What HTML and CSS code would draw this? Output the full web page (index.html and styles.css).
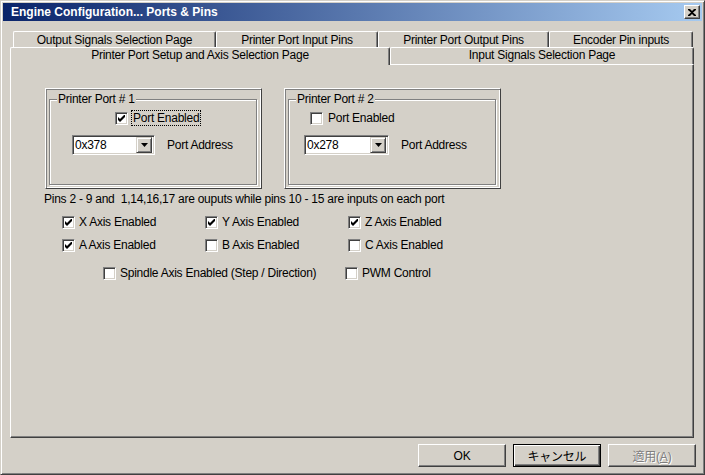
FILE: index.html
```html
<!DOCTYPE html>
<html lang="en">
<head>
    <meta charset="UTF-8">
    <title>Engine Configuration... Ports &amp; Pins</title>
    <link rel="stylesheet" href="styles.css">
</head>
<body>
<div class="window">
    <div class="titlebar">
        <span class="title">Engine Configuration... Ports &amp; Pins</span>
        <span class="close-btn">
            <svg width="8" height="7" viewBox="0 0 8 7"><path d="M0 0h2l2 2 2-2h2v1L5 3.5 8 6v1H6L4 5 2 7H0V6l3-2.5L0 1z" fill="#000"/></svg>
        </span>
    </div>

    <div class="client">
        <div class="tab-row back">
            <div class="tab t1">Output Signals Selection Page</div>
            <div class="tab t2">Printer Port Input Pins</div>
            <div class="tab t3">Printer Port Output Pins</div>
            <div class="tab t4">Encoder Pin inputs</div>
        </div>
        <div class="tab-row front">
            <div class="tab active t5">Printer Port Setup and Axis Selection Page</div>
            <div class="tab t6">Input Signals Selection Page</div>
        </div>

        <div class="panel">
            <div class="ports">
                <div class="port-frame">
                    <fieldset class="group">
                        <legend>Printer Port # 1</legend>
                        <div class="port-check p1">
                            <span class="check"><svg width="7" height="7" viewBox="0 0 7 7"><path d="M0 2L2 4L6 0H7V2L2 7L0 5Z" fill="#000"/></svg></span>
                            <span class="focus">Port Enabled</span>
                        </div>
                        <div class="address-row p1">
                            <div class="combo">
                                <span class="combo-value">0x378</span>
                                <span class="combo-btn"><svg width="7" height="4" viewBox="0 0 7 4"><path d="M0 0h7L3.5 4z" fill="#000"/></svg></span>
                            </div>
                            <span>Port Address</span>
                        </div>
                    </fieldset>
                </div>
                <div class="port-frame">
                    <fieldset class="group">
                        <legend>Printer Port # 2</legend>
                        <div class="port-check p2">
                            <span class="check"></span>
                            <span class="plain">Port Enabled</span>
                        </div>
                        <div class="address-row p2">
                            <div class="combo wide">
                                <span class="combo-value">0x278</span>
                                <span class="combo-btn"><svg width="7" height="4" viewBox="0 0 7 4"><path d="M0 0h7L3.5 4z" fill="#000"/></svg></span>
                            </div>
                            <span>Port Address</span>
                        </div>
                    </fieldset>
                </div>
            </div>

            <p class="pins-note">Pins 2 - 9 and&nbsp; 1,14,16,17 are ouputs while pins 10 - 15 are inputs on each port</p>

            <div class="axis-grid">
                <label class="option"><span class="check"><svg width="7" height="7" viewBox="0 0 7 7"><path d="M0 2L2 4L6 0H7V2L2 7L0 5Z" fill="#000"/></svg></span>X Axis Enabled</label>
                <label class="option"><span class="check"><svg width="7" height="7" viewBox="0 0 7 7"><path d="M0 2L2 4L6 0H7V2L2 7L0 5Z" fill="#000"/></svg></span>Y Axis Enabled</label>
                <label class="option"><span class="check"><svg width="7" height="7" viewBox="0 0 7 7"><path d="M0 2L2 4L6 0H7V2L2 7L0 5Z" fill="#000"/></svg></span>Z Axis Enabled</label>
                <label class="option"><span class="check"><svg width="7" height="7" viewBox="0 0 7 7"><path d="M0 2L2 4L6 0H7V2L2 7L0 5Z" fill="#000"/></svg></span>A Axis Enabled</label>
                <label class="option"><span class="check"></span>B Axis Enabled</label>
                <label class="option"><span class="check"></span>C Axis Enabled</label>
            </div>

            <div class="extra-row">
                <label class="option spindle"><span class="check"></span>Spindle Axis Enabled (Step / Direction)</label>
                <label class="option"><span class="check"></span>PWM Control</label>
            </div>
        </div>

        <div class="buttons">
            <button class="btn">OK</button>
            <button class="btn default">キャンセル</button>
            <button class="btn disabled">適用(<u>A</u>)</button>
        </div>
    </div>
</div>
</body>
</html>
```

FILE: styles.css
```css
body {
    margin: 0;
    font-family: "Liberation Sans", "Noto Sans CJK JP", sans-serif;
    font-size: 12px;
    letter-spacing: -0.25px;
    color: #000;
}

.window {
    width: 705px;
    height: 475px;
    box-sizing: border-box;
    background-color: #d4d0c8;
    border: 1px solid;
    border-color: #d4d0c8 #404040 #404040 #d4d0c8;
    box-shadow: inset 1px 1px #fff, inset -1px -1px #808080;
    padding: 2px;
}

.titlebar {
    height: 18px;
    display: flex;
    align-items: center;
    justify-content: space-between;
    padding: 0 2px 0 8px;
    background: linear-gradient(to right, #0a246a, #a6caf0);
}

.title {
    color: #fff;
    font-weight: bold;
    letter-spacing: 0;
}

.close-btn {
    width: 16px;
    height: 14px;
    box-sizing: border-box;
    display: flex;
    align-items: center;
    justify-content: center;
    background-color: #d4d0c8;
    border: 1px solid;
    border-color: #fff #404040 #404040 #fff;
    box-shadow: inset -1px -1px #808080;
}

.client {
    padding: 10px 0 0 7px;
}

/* tabs */
.tab-row {
    display: flex;
}

.tab-row.back {
    height: 16px;
    margin-left: 3px;
}

.tab-row.front {
    height: 17px;
}

.tab {
    box-sizing: border-box;
    text-align: center;
    line-height: 14px;
    border-top: 1px solid #fff;
    border-left: 1px solid #fff;
    border-right: 1px solid #404040;
    box-shadow: inset -1px 0 #808080;
    border-radius: 2px 2px 0 0;
}

.back .tab {
    padding-top: 1px;
}

.t1 { width: 203px; }
.t2 { width: 162px; }
.t3 { width: 171px; }
.t4 { width: 144px; }
.t5 { width: 380px; }
.t6 { width: 304px; }

.tab.active {
    position: relative;
    z-index: 1;
    height: 18px;
    background-color: #d4d0c8;
}

/* page */
.panel {
    width: 684px;
    height: 374px;
    box-sizing: border-box;
    border: 1px solid;
    border-color: #fff #404040 #404040 #fff;
    box-shadow: inset -1px -1px #808080;
    padding: 23px 0 0 33px;
}

.ports {
    display: flex;
    gap: 22px;
    margin-left: 1px;
}

.port-frame {
    width: 217px;
    height: 101px;
    box-sizing: border-box;
    border: 1px solid;
    border-color: #fff #404040 #404040 #fff;
    box-shadow: inset 1px 1px #808080, inset -1px -1px #fff;
    padding: 3px 4px 4px 3px;
}

.group {
    margin: 0;
    padding: 0;
    height: 93px;
    box-sizing: border-box;
    border: 1px solid #808080;
    box-shadow: 1px 1px #fff, inset 1px 1px #fff;
    min-width: 0;
}

.group legend {
    margin-left: 7px;
    padding: 0 1px;
    line-height: 14px;
    background-color: #d4d0c8;
}

.port-check {
    display: flex;
    align-items: center;
    height: 14px;
    margin-top: 5px;
}

.port-check.p1 { margin-left: 65px; }
.port-check.p2 { margin-left: 21px; }

.port-check .check {
    margin-right: 4px;
}

.focus {
    outline: 1px dotted #000;
    padding: 0 1px;
}

.plain {
    padding: 0 1px;
}

.address-row {
    display: flex;
    align-items: center;
    gap: 12px;
    margin-top: 10px;
}

.address-row.p1 { margin-left: 22px; }
.address-row.p2 { margin-left: 15px; }

.combo {
    width: 83px;
    height: 20px;
    box-sizing: border-box;
    display: flex;
    align-items: center;
    justify-content: space-between;
    background-color: #fff;
    border: 1px solid;
    border-color: #808080 #fff #fff #808080;
    box-shadow: inset 1px 1px #404040, inset -1px -1px #d4d0c8;
    padding: 1px 2px 1px 2px;
}

.combo.wide {
    width: 85px;
}

.combo-btn {
    width: 16px;
    height: 16px;
    box-sizing: border-box;
    display: flex;
    align-items: center;
    justify-content: center;
    background-color: #d4d0c8;
    border: 1px solid;
    border-color: #d4d0c8 #404040 #404040 #d4d0c8;
    box-shadow: inset 1px 1px #fff, inset -1px -1px #808080;
}

.pins-note {
    margin: 3px 0 0 0;
    line-height: 14px;
}

/* check boxes */
.check {
    width: 13px;
    height: 13px;
    box-sizing: border-box;
    flex-shrink: 0;
    display: inline-flex;
    align-items: center;
    justify-content: center;
    background-color: #fff;
    border: 1px solid;
    border-color: #808080 #fff #fff #808080;
    box-shadow: inset 1px 1px #404040, inset -1px -1px #d4d0c8;
}

.option {
    display: flex;
    align-items: center;
    gap: 4px;
    height: 14px;
}

.axis-grid {
    display: grid;
    grid-template-columns: 143px 143px 143px;
    row-gap: 9px;
    margin: 9px 0 0 18px;
}

.extra-row {
    display: flex;
    margin: 14px 0 0 59px;
}

.option.spindle {
    width: 242px;
}

/* dialog buttons */
.buttons {
    width: 686px;
    display: flex;
    justify-content: flex-end;
    gap: 7px;
    margin-top: 6px;
}

.btn {
    width: 88px;
    height: 23px;
    font-family: "Liberation Sans", "Noto Sans CJK JP", sans-serif;
    font-size: 12px;
    letter-spacing: -0.25px;
    background-color: #d4d0c8;
    border: 1px solid;
    border-color: #fff #404040 #404040 #fff;
    box-shadow: inset -1px -1px #808080;
    padding: 0;
    color: #000;
}

.btn.default {
    border-color: #000;
    box-shadow: inset 1px 1px #fff, inset -1px -1px #404040, inset -2px -2px #808080;
}

.btn.disabled {
    color: #808080;
    text-shadow: 1px 1px #fff;
}
```
